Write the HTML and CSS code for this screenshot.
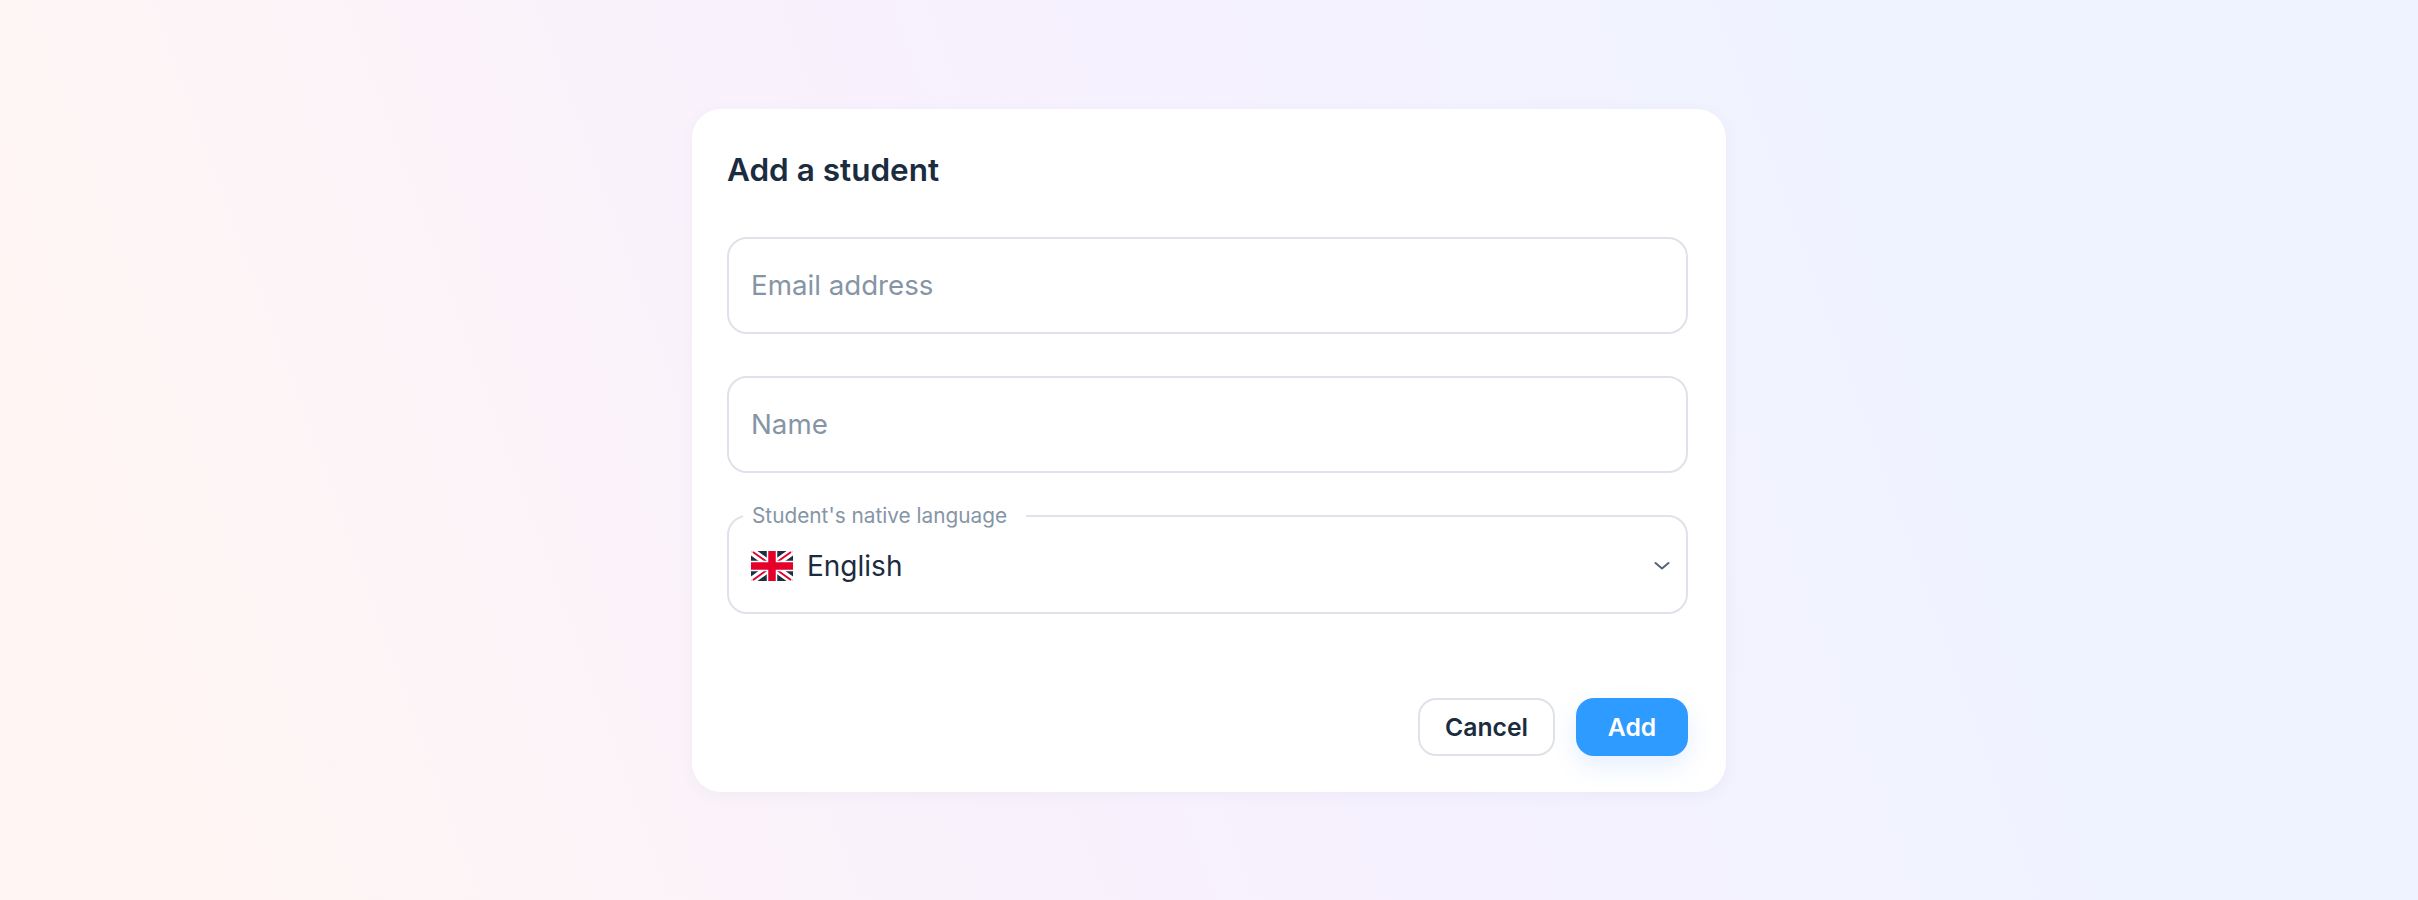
FILE: index.html
```html
<!DOCTYPE html>
<html lang="en">
<head>
    <meta charset="UTF-8">
    <meta name="viewport" content="width=device-width, initial-scale=1.0">
    <title>Add a student</title>
    <link rel="stylesheet" href="styles.css">
</head>
<body>
    <form class="dialog">
        <h1 class="dialog-title">Add a student</h1>
        <input class="text-field" type="email" placeholder="Email address">
        <input class="text-field" type="text" placeholder="Name">
        <fieldset class="select-field">
            <legend>Student's native language</legend>
            <div class="select-value">
                <svg class="flag" viewBox="0 0 42 30" width="42" height="30">
                    <clipPath id="flagClip"><rect width="42" height="30" rx="2"/></clipPath>
                    <g clip-path="url(#flagClip)">
                        <rect width="42" height="30" fill="#1f2f42"/>
                        <path d="M0 0L42 30M42 0L0 30" stroke="#fff" stroke-width="7.5"/>
                        <path d="M2 1L16 11M40 1L26 11M2 29L16 19M40 29L26 19" stroke="#e4002b" stroke-width="2"/>
                        <path d="M21 0V30M0 15H42" stroke="#fff" stroke-width="10.5"/>
                        <path d="M21 0V30M0 15H42" stroke="#e4002b" stroke-width="7.5"/>
                    </g>
                </svg>
                <span class="select-label">English</span>
                <svg class="chevron" viewBox="0 0 16 10" width="16" height="10">
                    <path d="M1.5 2L8 7.5L14.5 2" fill="none" stroke="#55637a" stroke-width="2" stroke-linecap="round" stroke-linejoin="round"/>
                </svg>
            </div>
        </fieldset>
        <div class="dialog-actions">
            <button type="button" class="btn btn-cancel">Cancel</button>
            <button type="submit" class="btn btn-add">Add</button>
        </div>
    </form>
</body>
</html>
```

FILE: styles.css
```css
* {
    box-sizing: border-box;
}
html, body {
    height: 100%;
}
body {
    margin: 0;
    display: flex;
    align-items: center;
    justify-content: center;
    font-family: Inter, "Liberation Sans", sans-serif;
    color: #1c2c3f;
    background: linear-gradient(70deg, #fff6f3 5%, #f8f1fe 45%, #eef3ff 82%, #eef3ff 100%);
}
.dialog {
    width: 1034px;
    height: 683px;
    padding: 42px 38px 36px 35px;
    background-color: #fff;
    border-radius: 29px;
    box-shadow: 0 4px 16px rgba(70, 80, 140, 0.05);
    display: flex;
    flex-direction: column;
}
.dialog-title {
    margin: 0 0 48px;
    font-size: 31.5px;
    line-height: 38px;
    font-weight: 600;
}
.text-field {
    display: block;
    width: 100%;
    height: 97px;
    margin-bottom: 42px;
    padding: 0 22px;
    border: 2px solid #dfe2e8;
    border-radius: 20px;
    font-family: inherit;
    font-size: 27.7px;
    color: #1c2c3f;
    outline: none;
}
.text-field::placeholder {
    color: #8695a6;
    opacity: 1;
}
.select-field {
    margin: -12px 0 0;
    padding: 0 22px;
    min-width: 0;
    border: 2px solid #dfe2e8;
    border-radius: 20px;
    height: 111px;
}
.select-field legend {
    padding: 0 19px 0 9px;
    margin-left: -8px;
    font-size: 20.8px;
    line-height: 26px;
    color: #8695a6;
}
.select-value {
    display: flex;
    align-items: center;
    height: 74px;
}
.flag {
    margin-right: 14px;
}
.select-label {
    font-size: 28px;
    flex: 1;
}
.chevron {
    margin-right: -6px;
}
.dialog-actions {
    margin-top: auto;
    display: flex;
    justify-content: flex-end;
    gap: 21px;
}
.btn {
    height: 58px;
    border-radius: 18px;
    font-family: inherit;
    font-size: 24.7px;
    font-weight: 600;
    cursor: pointer;
}
.btn-cancel {
    width: 137px;
    background-color: #fff;
    color: #1c2c3f;
    border: 2px solid #dfe2e8;
}
.btn-add {
    width: 112px;
    background-color: #2d9bff;
    color: #fff;
    border: none;
    box-shadow: 0 10px 24px rgba(45, 120, 255, 0.12);
}
```
